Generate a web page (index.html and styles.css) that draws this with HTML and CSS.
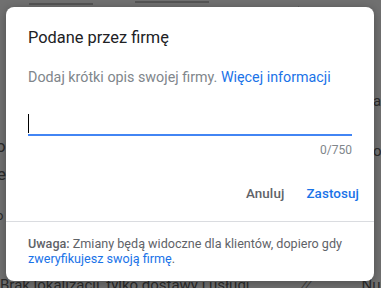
FILE: index.html
```html
<!DOCTYPE html>
<html lang="pl">
	<head>
		<title>Podane przez firmę</title>
		<meta charset="utf-8" />
		<link rel="stylesheet" href="styles.css">
	</head>
	<body>
		<div class="page">
			<div class="page-top">
				<span class="bar bar-a"></span>
				<span class="bar bar-b"></span>
			</div>
			<div class="page-main">
				<div class="col-left">
					<span class="ghost g1">o</span>
					<span class="ghost g2">e</span>
					<span class="ghost g3">o</span>
				</div>
				<div class="col-right">
					<span class="ghost g4">ac</span>
					<span class="ghost g5">ou</span>
				</div>
			</div>
			<div class="page-bottom">
				<span class="b-left">Brak lokalizacji, tylko dostawy i usługi</span>
				<span class="b-icon">//</span>
				<span class="b-right">Numer telefonu</span>
			</div>
		</div>

		<div class="dialog">
			<div class="dlg-body">
				<div class="dlg-title">Podane przez firmę</div>
				<div class="dlg-desc">Dodaj krótki opis swojej firmy. <a href="#">Więcej informacji</a></div>
				<div class="field">
					<span class="caret"></span>
				</div>
				<div class="counter">0/750</div>
			</div>
			<div class="dlg-actions">
				<button class="btn btn-cancel">Anuluj</button>
				<button class="btn btn-apply">Zastosuj</button>
			</div>
			<div class="dlg-foot">
				<b>Uwaga:</b> Zmiany będą widoczne dla klientów, dopiero gdy <a href="#">zweryfikujesz swoją firmę</a>.
			</div>
		</div>
	</body>
</html>
```

FILE: styles.css
```css
html, body {margin: 0; padding: 0;}
body {background: #707070; font-family: Roboto, "Noto Sans", Arial, sans-serif; width: 381px; height: 288px; overflow: hidden; position: relative;}

.page {height: 288px; display: flex; flex-direction: column; color: #2c2c2c;}
.page-top {height: 6px; position: relative;}
.bar {position: absolute; height: 2px; background: #545454;}
.bar-a {left: 29px; width: 64px; top: 3px;}
.bar-b {left: 135px; width: 74px; top: 1px;}
.page-main {flex: 1; display: flex; justify-content: space-between;}
.col-left, .col-right {width: 8px; position: relative; overflow: hidden;}
.col-right {border-left: 1px solid #5e5e5e; width: 82px; margin-left: auto;}
.ghost {position: absolute; font-size: 17px; color: #2a2a2a;}
.g1 {left: -4px; top: 130px;}
.g2 {left: -3px; top: 158px;}
.g3 {left: -4px; top: 202px; font-size: 13px;}
.g4 {left: 74px; top: 86px; font-size: 15px;}
.g5 {left: 74px; top: 136px; font-size: 15px;}
.page-bottom {height: 20px; display: flex; align-items: flex-end; font-size: 15px; color: #2a2a2a; white-space: nowrap; overflow: hidden;}
.b-left {line-height: 16px; position: relative; top: 5px;}
.b-icon {margin-left: 52px; line-height: 16px; position: relative; top: 5px; color: #3a3a3a; font-size: 14px; transform: skewX(-20deg);}
.b-right {margin-left: 50px; line-height: 16px; position: relative; top: 5px;}

.dialog {position: absolute; left: 6px; top: 7px; width: 368px; height: 274px; background: #fff; border-radius: 8px; box-shadow: 0 2px 10px rgba(0,0,0,0.3); display: flex; flex-direction: column; overflow: hidden;}
.dlg-body {padding: 19px 22px 0 22px;}
.dlg-title {font-size: 16.4px; line-height: 24px; color: #202124;}
.dlg-desc {font-size: 14.3px; line-height: 20px; color: #80868b; margin-top: 17px;}
.dlg-desc a, .dlg-foot a {color: #1a73e8; text-decoration: none;}
.field {margin-top: 27px; height: 20px; border-bottom: 2px solid #4285f4; position: relative;}
.caret {position: absolute; left: 0; top: 0; width: 1px; height: 19px; background: #000;}
.counter {text-align: right; font-size: 12px; line-height: 16px; color: #80868b; margin-top: 6px;}
.dlg-actions {display: flex; justify-content: flex-end; gap: 6px; padding: 18px 7px 0 0;}
.btn {background: none; border: none; padding: 0 8px; font-family: inherit; font-size: 13.4px; font-weight: 500; letter-spacing: 0.1px; height: 36px; line-height: 36px; cursor: pointer;}
.btn-cancel {color: #5f6368;}
.btn-apply {color: #1a73e8;}
.dlg-foot {margin-top: auto; border-top: 1px solid #dadce0; padding: 14px 22px 15px 22px; font-size: 12.6px; line-height: 15px; color: #5f6368;}
.dlg-foot b {font-weight: 500;}
```
